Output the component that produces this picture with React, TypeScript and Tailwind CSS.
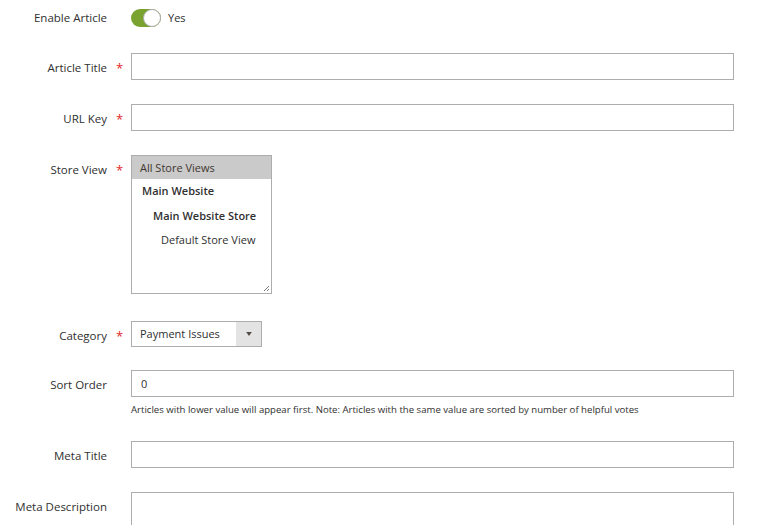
import { ReactNode } from 'react';

function Row({ label, required, children, className = '' }: { label: string; required?: boolean; children: ReactNode; className?: string }) {
  return (
    <div className={`flex items-start ${className}`}>
      <div className="flex w-[131px] shrink-0 justify-end pt-[6px]">
        <span className="text-[11.5px] font-medium text-[#303030]">{label}</span>
        <span className="ml-[9px] w-[15px] text-[13px] leading-[18px] text-[#e22626]">{required ? '*' : ''}</span>
      </div>
      <div className="w-[603px]">{children}</div>
    </div>
  );
}

const input = 'block h-[27px] w-full border border-[#adadad] bg-white px-[9px] text-[11px] text-[#303030]';

export default function App() {
  return (
    <div className="h-[525px] w-[757px] overflow-hidden bg-white pt-[9px]" style={{ fontFamily: '"Open Sans", sans-serif' }}>
      <div className="flex items-center">
        <div className="flex w-[131px] shrink-0 justify-end pr-[24px]">
          <span className="text-[11.5px] font-medium text-[#303030]">Enable Article</span>
        </div>
        <div className="relative h-[18px] w-[30px] rounded-full bg-[#79a22e]">
          <div className="absolute right-0 top-0 h-[18px] w-[18px] rounded-full border border-[#adadad] bg-white" />
        </div>
        <span className="ml-[7px] text-[11px] text-[#303030]">Yes</span>
      </div>

      <Row label="Article Title" required className="mt-[26px]">
        <input className={input} />
      </Row>
      <Row label="URL Key" required className="mt-[24px]">
        <input className={input} />
      </Row>
      <Row label="Store View" required className="mt-[24px]">
        <div className="relative h-[139px] w-[141px] border border-[#adadad] bg-white text-[11px] text-[#303030]">
          <div className="h-[23px] bg-[#cacaca] pl-[8px] leading-[23px] text-[#41362f]">All Store Views</div>
          <div className="pl-[10px] leading-[24px] font-semibold">Main Website</div>
          <div className="pl-[21px] pt-[1px] leading-[24px] font-semibold">Main Website Store</div>
          <div className="pl-[29px] leading-[24px]">Default Store View</div>
          <svg className="absolute bottom-[1px] right-[1px]" width="7" height="7" viewBox="0 0 7 7">
            <path d="M6 1L1 6M6 4L4 6" stroke="#555" strokeWidth="0.8" />
          </svg>
        </div>
      </Row>
      <Row label="Category" required className="mt-[27px]">
        <div className="flex h-[26px] w-[131px] border border-[#adadad] bg-white text-[11px] text-[#303030]">
          <div className="flex-1 pl-[8px] leading-[24px]">Payment Issues</div>
          <div className="flex w-[25px] items-center justify-center bg-[#e3e3e3]">
            <svg width="6" height="4" viewBox="0 0 7 5"><path d="M0 0h7L3.5 5z" fill="#514943" /></svg>
          </div>
        </div>
      </Row>
      <Row label="Sort Order" className="mt-[23px]">
        <input className={input} defaultValue="0" />
        <p className="mt-[6px] text-[9.6px] leading-[14px] text-[#303030]">
          Articles with lower value will appear first. Note: Articles with the same value are sorted by number of helpful votes
        </p>
      </Row>
      <Row label="Meta Title" className="mt-[24px]">
        <input className={input} />
      </Row>
      <Row label="Meta Description" className="mt-[24px]">
        <textarea className="block h-[60px] w-full border border-[#adadad] bg-white" />
      </Row>
    </div>
  );
}
